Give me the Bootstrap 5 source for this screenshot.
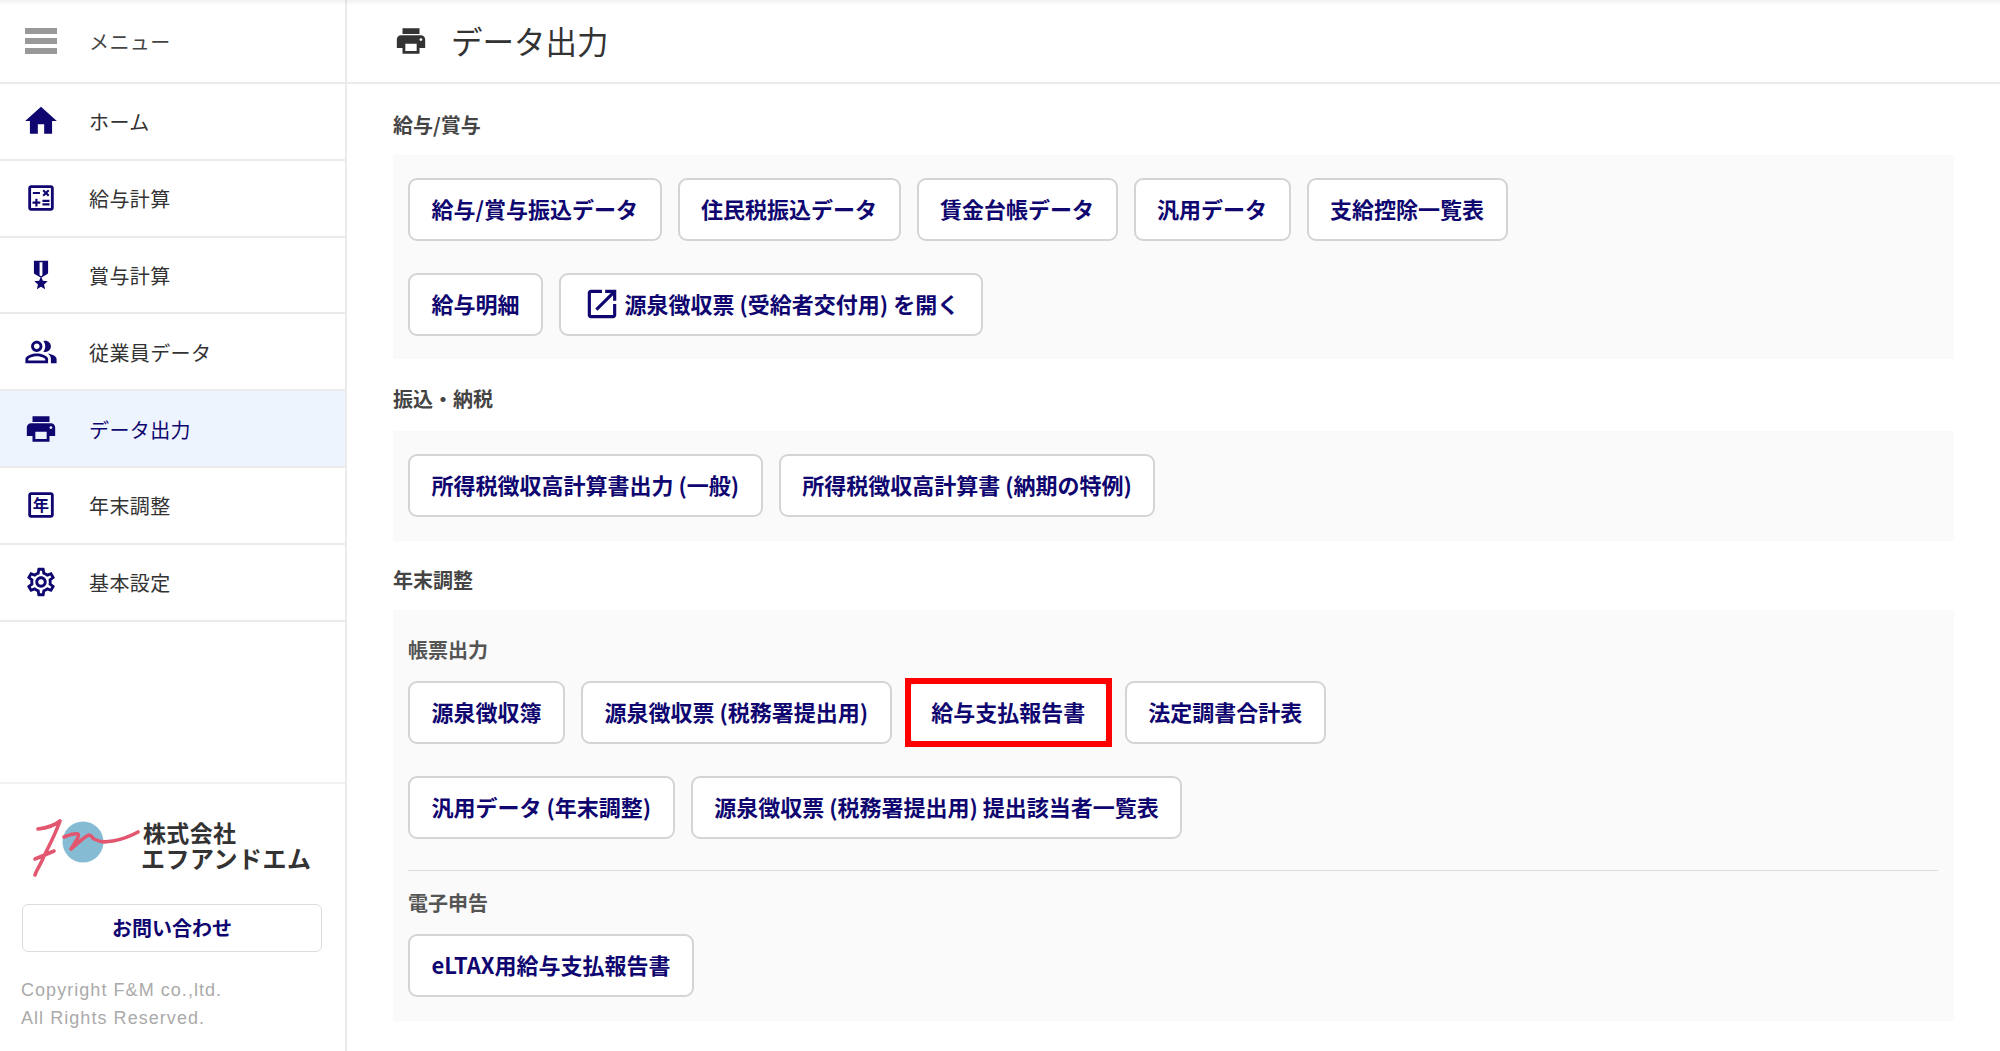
<!DOCTYPE html>
<html lang="ja">
<head>
<meta charset="utf-8">
<title>データ出力</title>
<link href="https://cdn.jsdelivr.net/npm/bootstrap@5.3.0/dist/css/bootstrap.min.css" rel="stylesheet">
<style>
html,body{height:100%;}
body{font-family:"Noto Sans CJK JP","Liberation Sans",sans-serif;color:#333;background:#fff;overflow:hidden;}
.shell{height:1051px;position:relative;}
.shell::before{content:"";position:absolute;left:0;right:0;top:0;height:6px;background:linear-gradient(rgba(0,0,0,.05),rgba(0,0,0,0));}
.side{width:347px;flex:none;border-right:2px solid #ebebeb;}
.side-head{height:84px;border-bottom:2px solid #ebebeb;color:#444;}
.side-row{height:76.8px;border-bottom:2px solid #ebebeb;color:#333;text-decoration:none;}
.side-row.on{background:#edf4fe;color:#0f0670;}
.side-ico{width:82px;margin-right:7px;flex:none;display:flex;justify-content:center;}
.side-ico svg{fill:#0f0670;width:34px;height:34px;}
.side-ico svg.big{width:38px;height:38px;}
.side-txt{font-size:20px;letter-spacing:.4px;position:relative;top:1px;}
.burger{width:32px;display:flex;flex-direction:column;gap:4.5px;}
.burger i{display:block;height:5.5px;background:#999;}
.side-foot{border-top:2px solid #f0f0f0;padding:28px 0 19px 22px;}
.brand{display:block;margin-bottom:22px;}
.contact{display:block;width:300px;height:48px;border:1px solid #ddd;border-radius:6px;background:#fff;color:#0f0670;font-size:20px;font-weight:700;padding:0;line-height:46px;}
.copy{font-family:"Liberation Sans",sans-serif;font-size:18px;line-height:28px;letter-spacing:1.05px;color:#aaa;margin:24px 0 0 -1px;}
.top-bar{height:84px;border-bottom:2px solid #ebebeb;padding-left:47px;}
.top-bar svg{width:34px;height:34px;fill:#333;margin-right:23px;}
.top-bar h1{font-size:31.5px;font-weight:400;margin:0;color:#333;}
.body-pad{padding:0 46px;}
.sec-title{font-size:20px;font-weight:700;line-height:30px;color:#444;margin:0;}
.t1{padding-top:26px;margin-bottom:15px;}
.t2{padding-top:25px;margin-bottom:17px;}
.t3{padding-top:24px;margin-bottom:15px;}
.panel{background:#fafafa;padding:23px 16px 23px 15px;}
.panel-b{padding-bottom:24px;}
.panel-c{padding-top:25px;padding-bottom:24px;}
.btns{display:flex;flex-wrap:wrap;gap:16px;}
.btns + .btns{margin-top:32px;}
.act{height:63px;border:2px solid #d4d4d4;border-radius:9px;background:#fff;color:#0f0670;font-size:22px;font-weight:700;padding:0 21.5px 2px;display:inline-flex;align-items:center;white-space:nowrap;position:relative;}
.act svg{width:38px;height:38px;fill:#0f0670;margin-right:4px;}
.act.flag::after{content:"";position:absolute;left:-5px;right:-5px;top:-5px;bottom:-5px;border:6px solid #f00;}
.sub{font-size:20px;font-weight:700;line-height:30px;color:#555;margin:0 0 16px;}
.rule{border-top:1px solid #ddd;margin:31px 0 17px;}
</style>
</head>
<body>
<div class="shell d-flex">
  <aside class="side d-flex flex-column">
    <div class="side-head d-flex align-items-center">
      <span class="side-ico"><span class="burger"><i></i><i></i><i></i></span></span>
      <span class="side-txt">メニュー</span>
    </div>
    <a href="#" class="side-row d-flex align-items-center">
      <span class="side-ico"><svg class="big" viewBox="0 0 24 24"><path d="M10 20v-6h4v6h5v-8h3L12 3 2 12h3v8z"/></svg></span>
      <span class="side-txt">ホーム</span>
    </a>
    <a href="#" class="side-row d-flex align-items-center">
      <span class="side-ico"><svg viewBox="0 0 24 24"><path d="M19 3H5c-1.1 0-2 .9-2 2v14c0 1.1.9 2 2 2h14c1.1 0 2-.9 2-2V5c0-1.1-.9-2-2-2zm0 16H5V5h14v14z"/><path d="M6.25 7.72h5v1.5h-5zM13 15.75h5v1.5h-5zM13 13.25h5v1.5h-5zM8 18h1.5v-2h2v-1.5h-2v-2H8v2H6V16h2zM14.09 10.95l1.41-1.41 1.41 1.41 1.06-1.06-1.41-1.42 1.41-1.41L16.91 6 15.5 7.41 14.09 6l-1.06 1.06 1.41 1.41-1.41 1.42z"/></svg></span>
      <span class="side-txt">給与計算</span>
    </a>
    <a href="#" class="side-row d-flex align-items-center">
      <span class="side-ico"><svg viewBox="0 0 24 24"><path d="M17 10.43V2H7v8.43c0 .35.18.68.49.86l4.18 2.51-.99 2.34-3.41.29 2.59 2.24L9.07 22 12 20.23 14.93 22l-.78-3.33 2.59-2.24-3.41-.29-.99-2.34 4.18-2.51c.3-.18.48-.5.48-.86zm-4 1.8l-1 .6-1-.6V3h2v9.23z"/></svg></span>
      <span class="side-txt">賞与計算</span>
    </a>
    <a href="#" class="side-row d-flex align-items-center">
      <span class="side-ico"><svg viewBox="0 0 24 24"><path d="M16.67 13.13C18.04 14.06 19 15.32 19 17v3h4v-3c0-2.18-3.57-3.47-6.33-3.87zM15 12c2.21 0 4-1.79 4-4s-1.79-4-4-4c-.47 0-.91.1-1.33.24C14.5 5.27 15 6.58 15 8s-.5 2.73-1.33 3.76c.42.14.86.24 1.33.24zM9 12c2.21 0 4-1.79 4-4s-1.79-4-4-4-4 1.79-4 4 1.79 4 4 4zm0-6c1.1 0 2 .9 2 2s-.9 2-2 2-2-.9-2-2 .9-2 2-2zM9 13c-2.67 0-8 1.34-8 4v3h16v-3c0-2.66-5.33-4-8-4zm6 5H3v-.99C3.2 16.29 6.3 15 9 15s5.8 1.29 6 2z"/></svg></span>
      <span class="side-txt">従業員データ</span>
    </a>
    <a href="#" class="side-row on d-flex align-items-center">
      <span class="side-ico"><svg viewBox="0 0 24 24"><path d="M19 8H5c-1.66 0-3 1.34-3 3v6h4v4h12v-4h4v-6c0-1.66-1.34-3-3-3zm-3 11H8v-5h8v5zm3-7c-.55 0-1-.45-1-1s.45-1 1-1 1 .45 1 1-.45 1-1 1zm-1-9H6v4h12V3z"/></svg></span>
      <span class="side-txt">データ出力</span>
    </a>
    <a href="#" class="side-row d-flex align-items-center">
      <span class="side-ico"><svg viewBox="0 0 24 24"><path d="M19 3H5c-1.1 0-2 .9-2 2v14c0 1.1.9 2 2 2h14c1.1 0 2-.9 2-2V5c0-1.1-.9-2-2-2zm0 16H5V5h14v14z"/><text x="12" y="16.4" text-anchor="middle" font-size="11.5" font-weight="700" font-family="Noto Sans CJK JP">年</text></svg></span>
      <span class="side-txt">年末調整</span>
    </a>
    <a href="#" class="side-row d-flex align-items-center">
      <span class="side-ico"><svg viewBox="0 0 24 24"><path d="M19.43 12.98c.04-.32.07-.64.07-.98 0-.34-.03-.66-.07-.98l2.11-1.65c.19-.15.24-.42.12-.64l-2-3.46c-.09-.16-.26-.25-.44-.25-.06 0-.12.01-.17.03l-2.49 1c-.52-.4-1.08-.73-1.69-.98l-.38-2.65C14.46 2.18 14.25 2 14 2h-4c-.25 0-.46.18-.49.42l-.38 2.65c-.61.25-1.17.59-1.69.98l-2.49-1c-.06-.02-.12-.03-.18-.03-.17 0-.34.09-.43.25l-2 3.46c-.13.22-.07.49.12.64l2.11 1.65c-.04.32-.07.65-.07.98 0 .33.03.66.07.98l-2.11 1.65c-.19.15-.24.42-.12.64l2 3.46c.09.16.26.25.44.25.06 0 .12-.01.17-.03l2.49-1c.52.4 1.08.73 1.69.98l.38 2.65c.03.24.24.42.49.42h4c.25 0 .46-.18.49-.42l.38-2.65c.61-.25 1.17-.59 1.69-.98l2.49 1c.06.02.12.03.18.03.17 0 .34-.09.43-.25l2-3.46c.12-.22.07-.49-.12-.64l-2.11-1.65zm-1.98-1.71c.04.31.05.52.05.73 0 .21-.02.43-.05.73l-.14 1.13.89.7 1.08.84-.7 1.21-1.27-.51-1.04-.42-.9.68c-.43.32-.84.56-1.25.73l-1.06.43-.16 1.13-.2 1.35h-1.4l-.19-1.35-.16-1.13-1.06-.43c-.43-.18-.83-.41-1.23-.71l-.91-.7-1.06.43-1.27.51-.7-1.21 1.08-.84.89-.7-.14-1.13c-.03-.31-.05-.54-.05-.74s.02-.43.05-.73l.14-1.13-.89-.7-1.08-.84.7-1.21 1.27.51 1.04.42.9-.68c.43-.32.84-.56 1.25-.73l1.06-.43.16-1.13.2-1.35h1.39l.19 1.35.16 1.13 1.06.43c.43.18.83.41 1.23.71l.91.7 1.06-.43 1.27-.51.7 1.21-1.07.85-.89.7.14 1.13zM12 8c-2.21 0-4 1.79-4 4s1.79 4 4 4 4-1.79 4-4-1.79-4-4-4zm0 6c-1.1 0-2-.9-2-2s.9-2 2-2 2 .9 2 2-.9 2-2 2z"/></svg></span>
      <span class="side-txt">基本設定</span>
    </a>
    <div class="side-foot mt-auto">
      <svg width="300" height="70" viewBox="22 813 300 70" class="brand">
        <circle cx="83" cy="843" r="20.5" fill="#86bcd3"/>
        <path d="M38 830c8-1 16-3 22-8-5 14-12 27-16 35-2 6-7 13-9 19M35 860c5-2 12-5 19-8M64 838c5-2 11-4 14-3 2 2-4 10-7 15 6-5 14-13 18-14 3 0 3 3 5 4 8 4 13 3 19 2 10-2 18-5 25-9" fill="none" stroke="#e2566f" stroke-width="3.6" stroke-linecap="round" stroke-linejoin="round"/>
        <text x="143" y="843" font-size="23" font-weight="700" fill="#333" textLength="93" font-family="Noto Sans CJK JP">株式会社</text>
        <text x="141" y="869" font-size="24" font-weight="700" fill="#333" textLength="170" font-family="Noto Sans CJK JP">エフアンドエム</text>
      </svg>
      <button type="button" class="contact text-center">お問い合わせ</button>
      <p class="copy">Copyright F&amp;M co.,ltd.<br>All Rights Reserved.</p>
    </div>
  </aside>
  <main class="flex-grow-1">
    <div class="top-bar d-flex align-items-center">
      <svg viewBox="0 0 24 24"><path d="M19 8H5c-1.66 0-3 1.34-3 3v6h4v4h12v-4h4v-6c0-1.66-1.34-3-3-3zm-3 11H8v-5h8v5zm3-7c-.55 0-1-.45-1-1s.45-1 1-1 1 .45 1 1-.45 1-1 1zm-1-9H6v4h12V3z"/></svg>
      <h1>データ出力</h1>
    </div>
    <div class="body-pad">
      <h2 class="sec-title t1">給与/賞与</h2>
      <div class="panel">
        <div class="btns">
          <button type="button" class="act">給与/賞与振込データ</button>
          <button type="button" class="act">住民税振込データ</button>
          <button type="button" class="act">賃金台帳データ</button>
          <button type="button" class="act">汎用データ</button>
          <button type="button" class="act">支給控除一覧表</button>
        </div>
        <div class="btns">
          <button type="button" class="act">給与明細</button>
          <button type="button" class="act"><svg viewBox="0 0 24 24"><path d="M19 19H5V5h7V3H5c-1.11 0-2 .9-2 2v14c0 1.1.89 2 2 2h14c1.1 0 2-.9 2-2v-7h-2v7zM14 3v2h3.59l-9.83 9.83 1.41 1.41L19 6.41V10h2V3h-7z"/></svg>源泉徴収票 (受給者交付用) を開く</button>
        </div>
      </div>
      <h2 class="sec-title t2">振込・納税</h2>
      <div class="panel panel-b">
        <div class="btns">
          <button type="button" class="act">所得税徴収高計算書出力 (一般)</button>
          <button type="button" class="act">所得税徴収高計算書 (納期の特例)</button>
        </div>
      </div>
      <h2 class="sec-title t3">年末調整</h2>
      <div class="panel panel-c">
        <h3 class="sub">帳票出力</h3>
        <div class="btns">
          <button type="button" class="act">源泉徴収簿</button>
          <button type="button" class="act">源泉徴収票 (税務署提出用)</button>
          <button type="button" class="act flag">給与支払報告書</button>
          <button type="button" class="act">法定調書合計表</button>
        </div>
        <div class="btns">
          <button type="button" class="act">汎用データ (年末調整)</button>
          <button type="button" class="act">源泉徴収票 (税務署提出用) 提出該当者一覧表</button>
        </div>
        <div class="rule"></div>
        <h3 class="sub">電子申告</h3>
        <div class="btns">
          <button type="button" class="act">eLTAX用給与支払報告書</button>
        </div>
      </div>
    </div>
  </main>
</div>
<script src="https://cdn.jsdelivr.net/npm/bootstrap@5.3.0/dist/js/bootstrap.bundle.min.js"></script>
</body>
</html>
